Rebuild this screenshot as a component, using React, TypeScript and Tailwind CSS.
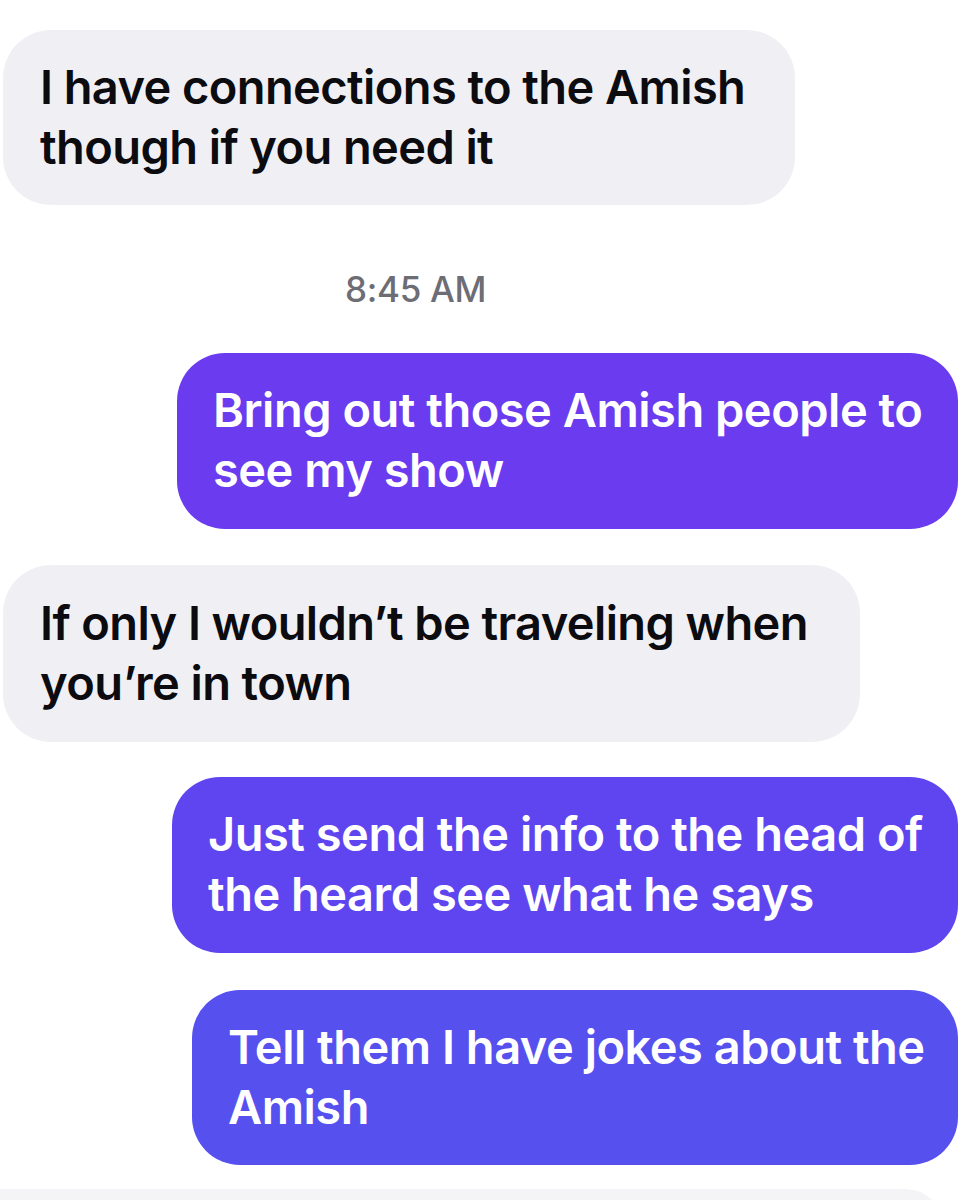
import React from "react";

const font = { fontFamily: "Inter, 'Noto Sans', sans-serif" };

export default function App() {
  return (
    <div
      className="w-[960px] h-[1200px] overflow-hidden bg-white flex flex-col"
      style={font}
    >
      {/* bubble 1 */}
      <div className="shrink-0 mt-[30px] ml-[3px] w-[792px] h-[175px] rounded-[48px] bg-[#f0f0f4] pl-[37px] pb-[2px] flex flex-col justify-center text-[47px] leading-[60px] font-semibold text-[#0b0b10] tracking-[-0.6px] whitespace-nowrap">
        <span>I have connections to the Amish</span>
        <span>though if you need it</span>
      </div>

      {/* timestamp */}
      <div className="shrink-0 mt-[60px] pl-[345px] h-[48px] flex items-center text-[35px] font-medium text-[#6d6d75] tracking-[-0.3px] whitespace-nowrap">
        8:45 AM
      </div>

      {/* bubble 2 */}
      <div className="shrink-0 mt-[40px] ml-[177px] w-[781px] h-[176px] rounded-[48px] bg-[#6a3bef] pl-[36px] pb-[2px] flex flex-col justify-center text-[47px] leading-[60px] font-semibold text-white tracking-[-0.5px] whitespace-nowrap">
        <span>Bring out those Amish people to</span>
        <span>see my show</span>
      </div>

      {/* bubble 3 */}
      <div className="shrink-0 mt-[36px] ml-[3px] w-[857px] h-[177px] rounded-[48px] bg-[#f0f0f4] pl-[37px] pb-[2px] flex flex-col justify-center text-[47px] leading-[60px] font-semibold text-[#0b0b10] tracking-[-0.6px] whitespace-nowrap">
        <span>If only I wouldn’t be traveling when</span>
        <span>you’re in town</span>
      </div>

      {/* bubble 4 */}
      <div className="shrink-0 mt-[35px] ml-[172px] w-[786px] h-[176px] rounded-[48px] bg-[#5e45ef] pl-[36px] pb-[2px] flex flex-col justify-center text-[47px] leading-[60px] font-semibold text-white tracking-[-0.5px] whitespace-nowrap">
        <span>Just send the info to the head of</span>
        <span>the heard see what he says</span>
      </div>

      {/* bubble 5 */}
      <div className="shrink-0 mt-[37px] ml-[192px] w-[766px] h-[175px] rounded-[48px] bg-[#5650ef] pl-[36px] pb-[2px] flex flex-col justify-center text-[47px] leading-[60px] font-semibold text-white tracking-[-0.5px] whitespace-nowrap">
        <span>Tell them I have jokes about the</span>
        <span>Amish</span>
      </div>

      {/* next bubble peeking */}
      <div className="shrink-0 mt-[24px] w-[945px] h-[60px] rounded-tr-[40px] bg-[#f4f4f6]" />
    </div>
  );
}
